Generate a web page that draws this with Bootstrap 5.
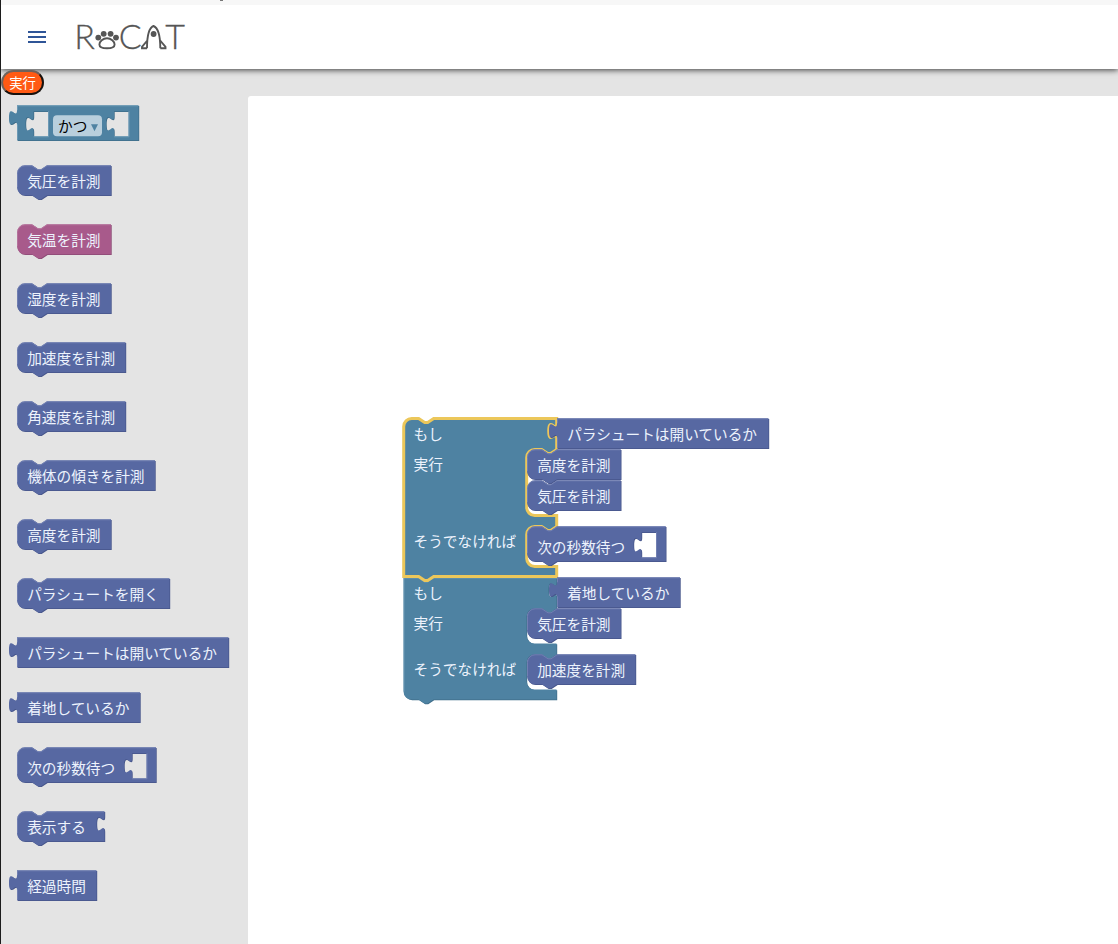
<!DOCTYPE html>
<html lang="ja">
<head>
<meta charset="utf-8">
<meta name="viewport" content="width=device-width, initial-scale=1">
<title>RoCAT</title>
<link rel="stylesheet" href="https://cdn.jsdelivr.net/npm/bootstrap@5.3.0/dist/css/bootstrap.min.css">
<style>
  body { font-family: "Noto Sans CJK JP", sans-serif; background: #e4e4e4; border-left: 1px solid #1c1c1c; }
  .top-strip { height: 5px; background: #f7f7f7; }
  .strip-mark { width: 3px; height: 1px; margin-left: 219px; background: #777; }
  .app-bar { height: 64px; padding: 0 0 0 26px; z-index: 2; box-shadow: 0 1px 6px rgba(0,0,0,.75); clip-path: inset(0 0 -10px 0); }
  .menu-btn { width: 20px; height: 20px; line-height: 0; }
  .logo { margin-left: 27px; overflow: visible; }
  .tool-row { height: 27px; }
  .run-btn { width: 43px; height: 25px; margin-top: 1px; font-size: 13.33px; line-height: 20px; background: #ff5a14; border: 2px solid; border-color: #6e625c #17110e #17110e #6e625c; border-radius: 13px; z-index: 3; }
  .flyout { width: 247px; padding-top: 9px; }
  .flyout svg, .canvas svg { display: block; overflow: visible; flex-shrink: 0; }
  .canvas { background: #fff; border-top-left-radius: 3px; }
  svg text { font-family: "Noto Sans CJK JP", sans-serif; font-size: 14.67px; fill: #edf3fd; }
  svg .logo-type { font-family: Lato, sans-serif; font-weight: 300; font-size: 34px; fill: #555; stroke: #555; stroke-width: .3px; }
  svg .field-text { fill: #000; }
</style>
</head>
<body class="vh-100 overflow-hidden d-flex flex-column">
<div class="top-strip flex-shrink-0"><div class="strip-mark"></div></div>
<nav class="app-bar bg-white d-flex align-items-center flex-shrink-0 position-relative">
  <button class="menu-btn btn p-0 border-0" aria-label="menu">
    <svg width="20" height="20" viewBox="0 0 20 20"><path d="M1 5h18M1 10h18M1 15h18" stroke="#2f5597" stroke-width="2"/></svg>
  </button>
  <svg class="logo" width="116" height="56" viewBox="73 9 116 56" fill="none" stroke="#555" stroke-width="1.9">
    <text class="logo-type" x="73.200" y="49">R</text>
    <g fill="#555" stroke="none"><circle cx="97.300" cy="37.600" r="2.900"/><circle cx="102.700" cy="33.800" r="2.900"/><circle cx="109.600" cy="33.800" r="2.900"/><circle cx="115" cy="37.600" r="2.900"/></g>
    <path d="M106 38.300c-4 0-7.600 3-7.600 6.200 0 2.700 3 3.800 7.600 3.800s7.600-1.100 7.600-3.800c0-3.200-3.600-6.200-7.600-6.200z"/>
    <text class="logo-type" x="117.800" y="49">C</text>
    <path d="M146 48.300C146 37 147.500 28 152.500 26c5 2 6.800 11 6.800 22.300M146.300 40.500l-5.300 6.300v1.500h5M159.200 40.500l5.300 6.300v1.500h-5.200"/>
    <circle cx="152.600" cy="34" r="2.900" fill="#555" stroke="none"/>
    <text class="logo-type" x="164.200" y="49">T</text>
  </svg>
</nav>
<div class="tool-row flex-shrink-0">
  <button class="run-btn btn p-0 text-white position-relative d-block">実行</button>
</div>
<main class="d-flex flex-grow-1 overflow-hidden">
  <aside class="flyout d-flex flex-column flex-shrink-0" id="flyout"></aside>
  <section class="canvas flex-grow-1"><svg id="workspace" width="870" height="848" viewBox="248 96 870 848"></svg></section>
</main>
<script>
  const COLORS = {
    blue:  ['#5768a2', '#7785b6', '#46558a'],
    teal:  ['#4e82a2', '#74a0ba', '#3e6c88'],
    pink:  ['#a85a8b', '#b97aa1', '#8b4a74']
  };
  const TAB_UP = 'c0-10-8 8-8-7.500s8 2.500 8-7.500';
  const TAB_DOWN = 'c0 10-8-8-8 7.500s8-2.500 8 7.500';
  const socket = (x, y, h) => `M${x} ${y}h14.500v${h}h-14.500v-${h - 20}${TAB_UP}z`;

  function paint(path, tone, light = '') {
    const [fill, hi, dark] = COLORS[tone];
    return `<path d="${path}" transform="translate(.7 .7)" fill="${dark}" fill-rule="evenodd"/>` +
      `<path d="${path}" fill="${fill}" fill-rule="evenodd"/>` +
      `<path d="${light}" fill="none" stroke="${hi}" stroke-width=".8"/>`;
  }
  function block(o) {
    const w = o.w, h = o.h || 30;
    let d, light;
    if (o.out) {
      d = `M0 0H${w}V${h}H0V20${TAB_UP}z`;
      light = `M.5 5V.5H${w - .5}M.5 ${h - .5}V19`;
    } else {
      d = `M0 8A8 8 0 0 1 8 0H15l6 4h3l6-4H${w}${o.input ? 'V5' + TAB_DOWN : ''}V${h}H30l-6 4h-3l-6-4H8a8 8 0 0 1-8-8z`;
      light = `M.5 ${h - 8}V8A7.500 7.500 0 0 1 8 .5H15l6 4h3l6-4H${w - .5}`;
    }
    (o.sockets || []).forEach(x => {
      d += socket(x, 6, 25);
      light += `M${x + 15} 6v25.500h-15`;
    });
    return paint(d, o.tone || 'blue', light) +
      (o.label ? `<text x="10.200" y="${o.ty || 21.700}">${o.label}</text>` : '') + (o.extra || '');
  }

  const dropdown = '<rect x="36" y="10" width="49" height="21" rx="4" fill="#b9cfdd"/>' +
    '<text class="field-text" x="41" y="26.700">かつ</text><path d="M74 19h7l-3.500 7z" fill="#4e82a2"/>';
  const items = [
    { w: 121.500, h: 35, out: 1, tone: 'teal', sockets: [16.500, 97], extra: dropdown, row: 60 },
    { w: 94, label: '気圧を計測' },
    { w: 94, label: '気温を計測', tone: 'pink' },
    { w: 94, label: '湿度を計測' },
    { w: 108.500, label: '加速度を計測' },
    { w: 108.500, label: '角速度を計測' },
    { w: 138, label: '機体の傾きを計測' },
    { w: 94, label: '高度を計測' },
    { w: 152.500, label: 'パラシュートを開く' },
    { w: 211.500, label: 'パラシュートは開いているか', out: 1, row: 55 },
    { w: 123, label: '着地しているか', out: 1, row: 55 },
    { w: 139, h: 35, label: '次の秒数待つ', ty: 26.700, sockets: [115], row: 64 },
    { w: 87.500, label: '表示する', input: 1 },
    { w: 79.500, label: '経過時間', out: 1 }
  ];
  document.getElementById('flyout').innerHTML = items.map(o =>
    `<svg width="230" height="${o.row || 59}"><g transform="translate(16 .3)">${block(o)}</g></svg>`).join('');

  /* if / else container: arguments are the top and bottom of both statement slots, then the full height */
  function branch(a, aEnd, b, bEnd, end, last) {
    const slot = (y, e) => `V${y}l-6 4h-3l-6-4h-7a8 8 0 0 0-8 8V${e - 8}a8 8 0 0 0 8 8H153`;
    return `M0 8A8 8 0 0 1 8 0H15l6 4h3l6-4H153V5${TAB_DOWN}` + slot(a, aEnd) + slot(b, bEnd) +
      `V${end}H30l-6 4h-3l-6-4` + (last ? `H8a8 8 0 0 1-8-8z` : 'H0z');
  }
  const at = (x, y, s) => `<g transform="translate(${x} ${y})">${s}</g>`;
  const words = y2 => `<text x="10" y="21">もし</text><text x="10" y="51">実行</text><text x="10" y="${y2}">そうでなければ</text>`;
  const first = branch(31, 97, 108, 148, 158, false);
  const second = branch(31, 66, 77, 112, 122, true).replace('M0 8A8 8 0 0 1 8 0', 'M0 0');
  document.getElementById('workspace').innerHTML =
    at(403.500, 577.500, paint(second, 'teal', 'M.5 114V.5H15l6 4h3l6-4H153') + words(97)) +
    at(403.700, 418.500, `<path d="${first}" fill="#4e82a2" stroke="#ecc75a" stroke-width="3"/>`) +
    at(403.500, 418.500, words(128)) +
    at(557, 418.300, block({ w: 211.500, label: 'パラシュートは開いているか', out: 1 })) +
    at(527, 449.300, block({ w: 93.800, label: '高度を計測' })) +
    at(527, 480.300, block({ w: 93.800, label: '気圧を計測' })) +
    at(527, 526.300, block({ w: 138.800, h: 35, label: '次の秒数待つ', ty: 26.700, sockets: [114.500] })) +
    at(557, 577.300, block({ w: 123, label: '着地しているか', out: 1 })) +
    at(527, 608.300, block({ w: 93.800, label: '気圧を計測' })) +
    at(527, 654.300, block({ w: 108.500, label: '加速度を計測' }));
</script>
<script src="https://cdn.jsdelivr.net/npm/bootstrap@5.3.0/dist/js/bootstrap.bundle.min.js"></script>
</body>
</html>
